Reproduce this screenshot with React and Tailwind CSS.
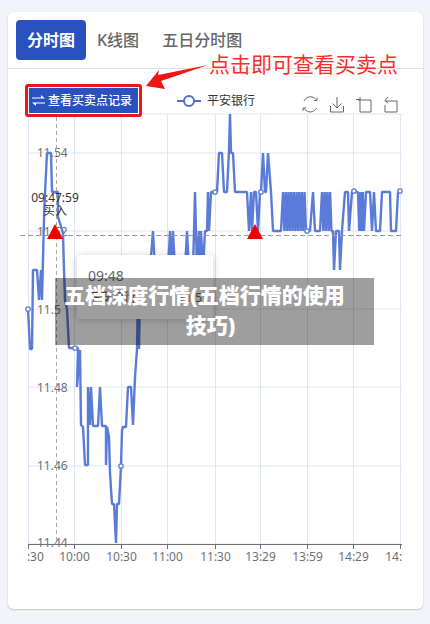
const font = { fontFamily: '"Noto Sans", "Noto Sans CJK SC", sans-serif' };

const gridY = [114, 153, 231, 309, 387, 466];
const ticks = [
  { x: 28, label: "09:30" },
  { x: 74, label: "10:00" },
  { x: 121, label: "10:30" },
  { x: 167, label: "11:00" },
  { x: 215, label: "11:30" },
  { x: 260, label: "13:29" },
  { x: 307, label: "13:59" },
  { x: 353, label: "14:29" },
  { x: 400, label: "14:59" },
];
const yLabels = [
  { y: 152, label: "11.54" },
  { y: 231, label: "11.52" },
  { y: 309, label: "11.5" },
  { y: 387, label: "11.48" },
  { y: 465, label: "11.46" },
  { y: 542, label: "11.44" },
];

// flips between the 192 and 231 price levels
function zigzag(from, to, step) {
  const out = [];
  let up = true;
  for (let x = from; x <= to; x += step) {
    out.push([x, up ? 192 : 231]);
    up = !up;
  }
  return out;
}

const points = [
  [28, 309], [30, 349], [32, 349], [33, 270], [37, 270], [39, 300], [41, 270], [42, 300], [44, 218], [45, 193],
  [47, 153], [51, 153], [52, 192], [58, 192], [58, 217], [63, 233], [64, 270], [65, 300], [67, 309], [69, 348],
  [75, 348], [78, 348], [77, 387], [80, 350], [81, 425], [83, 427], [85, 465], [88, 465], [88, 387], [90, 425],
  [91, 387], [93, 426], [98, 426], [100, 387], [102, 426], [106, 426], [106, 465], [107, 427], [109, 437],
  [110, 473], [112, 504], [114, 504], [116, 543], [117, 504], [119, 504], [121, 466], [122, 430], [123, 427],
  [126, 427], [128, 387], [131, 387], [133, 425], [135, 377], [137, 349], [138, 290], [139, 349], [140, 290],
  [141, 270], [150, 270], [153, 231], [155, 270], [168, 270], [170, 231], [172, 270], [173, 231], [175, 270],
  [185, 270], [187, 231], [189, 270], [193, 270], [195, 192], [197, 270], [199, 231], [200, 270], [201, 231],
  [203, 270], [205, 231], [207, 231], [208, 192], [209, 231], [211, 192], [217, 192], [219, 153], [222, 153],
  [224, 192], [227, 192], [229, 150], [230, 114], [231, 153], [233, 153], [235, 192], [247, 192], [249, 231],
  [251, 192], [252, 231], [254, 192], [256, 192], [258, 231], [260, 192], [261, 192], [263, 153], [265, 192],
  [266, 192], [268, 153], [271, 192], [273, 231], [281, 231],
  ...zigzag(283, 306, 1.35),
  [307, 231], [310, 231], [313, 192], [315, 231], [320, 231],
  ...zigzag(322, 332, 1.35),
  [333, 231], [334, 270], [336, 231], [339, 231], [340, 270], [342, 231], [345, 192], [348, 192], [349, 231],
  [352, 192], [356, 192],
  ...zigzag(358, 365, 1.2),
  [366, 192], [370, 192], [372, 231], [374, 192], [376, 231], [380, 231], [382, 192], [390, 192], [391, 231],
  [396, 231], [398, 192], [400, 192],
];

const markers = [
  [28, 309], [75, 348], [121, 466], [215, 192], [261, 192], [307, 231], [354, 191], [400, 191],
];

function Triangle({ x }) {
  return <polygon points={`${x - 8},239 ${x},224 ${x + 8},239`} fill="#f00000" />;
}

function Chart() {
  return (
    <svg className="block" width="415" height="470" viewBox="8 110 415 470">
      <defs>
        <clipPath id="plot">
          <rect x="28" y="110" width="374" height="470" />
        </clipPath>
      </defs>
      {gridY.concat(544).map((y) => (
        <line key={y} x1="28" x2="402" y1={y} y2={y} stroke="#e0e6f1" />
      ))}
      {ticks.map((t) => (
        <line key={t.x} x1={t.x + 0.5} x2={t.x + 0.5} y1="114" y2="544" stroke="#e0e6f1" />
      ))}
      {yLabels.map((l) => (
        <text key={l.label} x="37" y={l.y} dy="4.5" fontSize="12" fill="#6e7079">
          {l.label}
        </text>
      ))}
      <line x1="56.5" x2="56.5" y1="110" y2="544" stroke="#aaa" strokeDasharray="4 3" />
      <polyline
        points={points.map((p) => p.join(",")).join(" ")}
        fill="none"
        stroke="#5b7bd8"
        strokeWidth="2.4"
        strokeLinejoin="bevel"
      />
      {markers.map(([x, y]) => (
        <circle key={x} cx={x} cy={y} r="2.2" fill="#fff" stroke="#5b7bd8" strokeWidth="1.3" />
      ))}
      <line x1="20" x2="402" y1="235.5" y2="235.5" stroke="#999" strokeDasharray="5 3" />
      <Triangle x={55} />
      <Triangle x={255} />
      <text x="55" y="202" fontSize="12" fill="#333" textAnchor="middle">
        09:47:59
      </text>
      <text x="55" y="215" fontSize="12" fill="#333" textAnchor="middle">
        买入
      </text>
      <line x1="28" x2="402" y1="544.5" y2="544.5" stroke="#6e7079" />
      <g clipPath="url(#plot)">
        {ticks.map((t) => (
          <g key={t.x}>
            <line x1={t.x + 0.5} x2={t.x + 0.5} y1="544" y2="549" stroke="#6e7079" />
            <text x={t.x + 0.5} y="561" fontSize="12" fill="#6e7079" textAnchor="middle">
              {t.label}
            </text>
          </g>
        ))}
      </g>
    </svg>
  );
}

function ToolIcons() {
  return (
    <svg width="97" height="17" viewBox="300 96 97 17" fill="none" stroke="#666" strokeWidth="1">
      <path d="M303 101a7 7 0 0 1 12 -1.500M315.500 108a7 7 0 0 1 -12 1M316 97.500v3h-3M302 111v-3h3" />
      <path d="M336 97v11M331.500 103.500l4.500 4.500 4.500-4.500M329.500 106v6h13v-6" />
      <path d="M357 100h13v12h-11v-15M355 99.500h4" />
      <path d="M384 101h12v11h-12v-7M387 97l-3 3.500 3 3" />
    </svg>
  );
}

export default function App() {
  return (
    <div className="relative h-[624px] w-[430px] overflow-hidden bg-[#f3f4f9] px-2 pt-3" style={font}>
      <div className="h-[597px] w-[415px] rounded-md bg-white shadow-[0_1px_2px_rgba(0,0,0,0.2)]">
        <div className="flex h-[57px] items-start border-b border-[#e0e1e5] pl-2 pt-2">
          <div className="flex h-10 w-[70px] items-center justify-center rounded-[4px] bg-[#2a52be] text-base font-bold text-white">
            分时图
          </div>
          <div className="ml-[11px] flex h-10 items-center text-base font-medium text-[#666]">K线图</div>
          <div className="ml-[23px] flex h-10 items-center text-base font-medium text-[#666]">五日分时图</div>
        </div>
        <div className="relative z-10 flex h-[41px] items-start">
          <div className="ml-[17px] mt-[15px] h-[33px] w-[117px] rounded-[3px] border-[3px] border-[#f01414] bg-white p-px">
            <div className="flex h-full items-center gap-[3px] bg-[#2a52be] pl-[3px] text-xs font-medium text-white">
              <svg width="13" height="11" viewBox="0 0 13 11" fill="#fff">
                <path d="M0 2.500h9v-2.500l4 3.500h-13zM13 8.500h-9v2.500l-4-3.500h13z" />
              </svg>
              查看买卖点记录
            </div>
          </div>
          <div className="ml-[35px] mt-[24px] flex h-4 items-center text-xs text-[#333]">
            <svg width="24" height="12" viewBox="0 0 24 12" fill="#fff" stroke="#5470c6" strokeWidth="2">
              <path d="M0 6h24" />
              <circle cx="12" cy="6" r="5" />
            </svg>
            <span className="ml-1.5">平安银行</span>
          </div>
          <div className="ml-[46px] mt-[27px]">
            <ToolIcons />
          </div>
        </div>
        <Chart />
      </div>

      <div className="absolute left-[77px] top-[255px] h-[64px] w-[136px] rounded bg-white px-[11px] py-[11px] text-sm text-[#666] shadow-[0_1px_8px_rgba(0,0,0,0.2)]">
        09:48
        <div className="mt-1 flex justify-between text-xs">
          <span>平安银行</span>
          <span>11.5</span>
        </div>
      </div>

      <div className="absolute left-[209px] top-[49px] text-[21px] leading-[30px] text-[#fb2c2c]">点击即可查看买卖点</div>
      <svg className="absolute left-[140px] top-[60px]" width="72" height="32" viewBox="140 60 72 32">
        <polygon points="146,86 159,70 158,75 208,65 161,81 165,89" fill="#f01414" />
      </svg>

      <div className="absolute left-[55px] top-[278px] h-[67px] w-[319px] bg-black/[0.38] pt-[2px] text-center text-[21px] font-black leading-[30px] text-white">
        <div className="pr-[20px]">五档深度行情(五档行情的使用</div>
        <div className="pr-[8px]">技巧)</div>
      </div>
    </div>
  );
}
